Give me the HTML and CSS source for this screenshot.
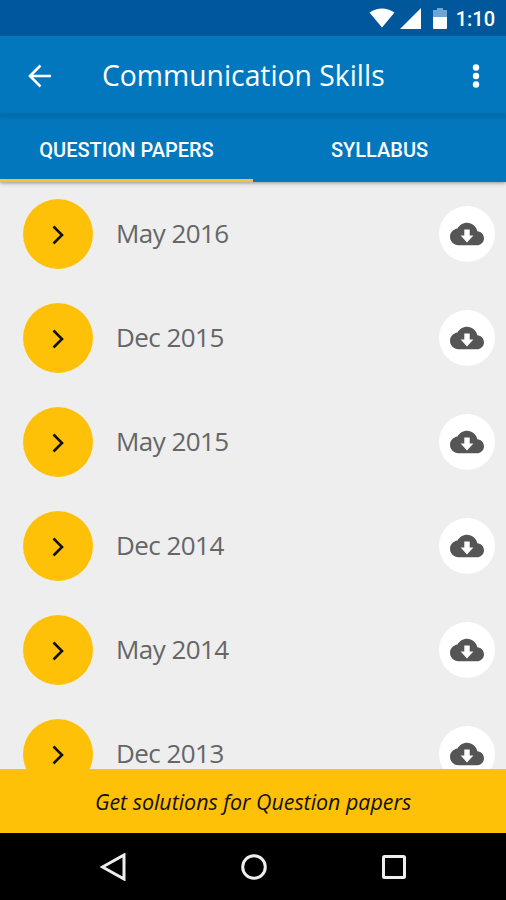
FILE: index.html
```html
<!DOCTYPE html>
<html lang="en">
<head>
  <meta charset="UTF-8">
  <meta name="viewport" content="width=device-width, initial-scale=1.0">
  <title>Communication Skills</title>
  <link rel="stylesheet" href="styles.css">
</head>

<body>
<!-- shared icons -->
<svg class="sprite" aria-hidden="true">
  <symbol id="chevron" viewBox="0 0 12 20">
    <path d="M1.5 1.5L10 10L1.5 18.5" fill="none" stroke="currentColor" stroke-width="2.6"/>
  </symbol>
  <symbol id="cloud" viewBox="0 0 24 24">
    <path fill="currentColor" d="M19.35 10.04C18.67 6.59 15.64 4 12 4 9.11 4 6.6 5.64 5.35 8.04 2.34 8.36 0 10.91 0 14c0 3.31 2.69 6 6 6h13c2.76 0 5-2.24 5-5 0-2.64-2.05-4.78-4.65-4.96zM16.500 13L12 18l-4.500-5h2.600V8.800h3.800V13h2.600z"/>
  </symbol>
</svg>

<div class="screen">

  <div class="statusbar">
    <svg class="wifi" viewBox="0 0 26 20"><path fill="#fff" d="M13 19.5L.5 4.5Q13-3.5 25.5 4.5z"/></svg>
    <svg class="signal" viewBox="0 0 21 21"><path fill="#fff" d="M21 0v21H0z"/></svg>
    <svg class="battery" viewBox="0 0 14 21">
      <path fill="#6fa5d3" d="M4 0h6v2h4v7H0V2h4z"/>
      <path fill="#fff" d="M0 9h14v11q0 1-1 1H1q-1 0-1-1z"/>
    </svg>
    <span class="clock">1:10</span>
  </div>

  <header class="appbar">
    <button class="back-btn" aria-label="Back">
      <svg viewBox="0 0 24 24"><path d="M23 12H2M12.5 1.5L2 12l10.500 10.500" fill="none" stroke="#fff" stroke-width="2.600"/></svg>
    </button>
    <h1 class="title">Communication Skills</h1>
    <button class="more-btn" aria-label="More">
      <svg viewBox="0 0 8 24"><g fill="#fff"><circle cx="4" cy="3.500" r="3.200"/><circle cx="4" cy="12" r="3.200"/><circle cx="4" cy="20.500" r="3.200"/></g></svg>
    </button>
  </header>

  <nav class="tabs">
    <a class="tab active">QUESTION PAPERS</a>
    <a class="tab">SYLLABUS</a>
  </nav>

  <main class="list">
    <div class="row">
      <span class="bullet"><svg><use href="#chevron"/></svg></span>
      <span class="label">May 2016</span>
      <button class="download" aria-label="Download"><svg><use href="#cloud"/></svg></button>
    </div>
    <div class="row">
      <span class="bullet"><svg><use href="#chevron"/></svg></span>
      <span class="label">Dec 2015</span>
      <button class="download" aria-label="Download"><svg><use href="#cloud"/></svg></button>
    </div>
    <div class="row">
      <span class="bullet"><svg><use href="#chevron"/></svg></span>
      <span class="label">May 2015</span>
      <button class="download" aria-label="Download"><svg><use href="#cloud"/></svg></button>
    </div>
    <div class="row">
      <span class="bullet"><svg><use href="#chevron"/></svg></span>
      <span class="label">Dec 2014</span>
      <button class="download" aria-label="Download"><svg><use href="#cloud"/></svg></button>
    </div>
    <div class="row">
      <span class="bullet"><svg><use href="#chevron"/></svg></span>
      <span class="label">May 2014</span>
      <button class="download" aria-label="Download"><svg><use href="#cloud"/></svg></button>
    </div>
    <div class="row">
      <span class="bullet"><svg><use href="#chevron"/></svg></span>
      <span class="label">Dec 2013</span>
      <button class="download" aria-label="Download"><svg><use href="#cloud"/></svg></button>
    </div>
  </main>

  <a class="banner">Get solutions for Question papers</a>

  <div class="navbar">
    <svg viewBox="0 0 28 28"><path d="M24 2v24L2.500 14z"/></svg>
    <svg viewBox="0 0 28 28"><circle cx="14" cy="14" r="11.300"/></svg>
    <svg viewBox="0 0 28 28"><rect x="3.500" y="3.500" width="21" height="21" rx="1"/></svg>
  </div>

</div>
</body>
</html>
```

FILE: styles.css
```css
:root{
  --blue:#0277bd;
  --blue-dark:#01579b;
  --amber:#ffc107;
  --bg:#eee;
}

*{ box-sizing:border-box; }
html,body{
  margin:0; padding:0;
  height:100%;
  overflow:hidden;
  font-family:"Open Sans", "Noto Sans", sans-serif;
  background:#000;
}
button{ padding:0; border:none; background:none; }
svg{ display:block; }
.sprite{ display:none; }

.screen{
  width:100%; height:100vh;
  display:flex; flex-direction:column;
}

/* ===== STATUS BAR ===== */
.statusbar{
  flex:0 0 36px;
  display:flex; align-items:center; justify-content:flex-end;
  padding-right:11px;
  background:var(--blue-dark);
}
.wifi{ width:26px; height:20px; margin-right:5px; }
.signal{ width:21px; height:21px; margin-right:12px; }
.battery{ width:14px; height:21px; margin-right:9px; }
.clock{
  color:#fff;
  font:500 20px/24px Roboto, sans-serif;
  padding-top:2px;
}

/* ===== APP BAR ===== */
.appbar{
  flex:0 0 79px;
  display:flex; align-items:center;
  padding:0 26px 0 28px;
  background:var(--blue);
}
.back-btn svg{ width:24px; height:24px; }
.title{
  flex:1;
  margin:0 0 0 50px;
  padding-bottom:2px;
  color:#fff;
  font-size:28.3px; font-weight:400; line-height:40px;
  white-space:nowrap;
}
.more-btn svg{ width:8px; height:24px; }

/* ===== TABS ===== */
.tabs{
  flex:0 0 67px;
  display:flex;
  position:relative;
  background:linear-gradient(#026aa9, var(--blue) 6px);
  box-shadow:0 1px 4px rgba(0,0,0,.4);
}
.tab{
  flex:1;
  display:flex; align-items:center; justify-content:center;
  padding-top:5px;
  border-bottom:3px solid transparent;
  color:#fff;
  font:500 20px/24px Roboto, sans-serif;
}
.tab.active{ border-color:#fbc02d; }

/* ===== LIST ===== */
.list{
  flex:1; min-height:0;
  overflow:hidden;
  background:var(--bg);
}
.row{
  height:104px;
  display:flex; align-items:center;
  padding:0 11px 0 23px;
}
.bullet{
  width:70px; height:70px;
  display:flex; align-items:center; justify-content:center;
  padding-top:2px;
  border-radius:50%;
  background:var(--amber);
  color:#111;
}
.bullet svg{ width:12px; height:20px; }
.label{
  flex:1;
  margin-left:23px;
  padding-bottom:2px;
  color:#666;
  font-size:26px; line-height:34px;
  letter-spacing:-.55px;
}
.download{
  width:56px; height:56px;
  display:flex; align-items:center; justify-content:center;
  border-radius:50%;
  background:#fff;
  color:#555;
}
.download svg{ width:34px; height:34px; }

/* ===== BOTTOM ===== */
.banner{
  flex:0 0 64px;
  display:flex; align-items:center; justify-content:center;
  background:var(--amber);
  color:#111;
  font-size:21.4px; font-style:italic;
}
.navbar{
  flex:0 0 67px;
  display:flex; align-items:center; justify-content:center;
  gap:112px;
  padding-left:1px;
  background:#000;
}
.navbar svg{
  width:28px; height:28px;
  fill:none; stroke:#eee; stroke-width:3;
}
```
